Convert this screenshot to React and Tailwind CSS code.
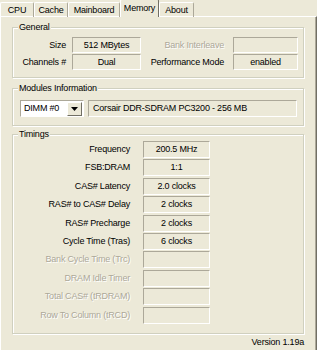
import React from "react";

const sunken =
  "border border-t-[#ACA899] border-l-[#ACA899] border-b-white border-r-white";

function Field({ children, className = "" }) {
  return (
    <div
      className={`h-[16px] ${sunken} flex items-center justify-center text-black leading-none ${className}`}
    >
      {children}
    </div>
  );
}

function Label({ children, disabled, className = "" }) {
  return (
    <div
      className={`text-right leading-none whitespace-nowrap ${
        disabled ? "text-[#ACA899] [text-shadow:1px_1px_0_#ffffff]" : "text-black"
      } ${className}`}
    >
      {children}
    </div>
  );
}

function Group({ title, className = "", children }) {
  return (
    <div
      className={`relative border border-[#D0D0BF] shadow-[inset_1px_1px_0_#ffffff,1px_1px_0_#ffffff] ${className}`}
    >
      <div className="absolute -top-[5px] left-[5px] px-[1px] bg-[#ECE9D8] leading-none text-black">
        {title}
      </div>
      {children}
    </div>
  );
}

const tabs = [
  { name: "CPU", w: "w-[34px]" },
  { name: "Cache", w: "w-[34px]" },
  { name: "Mainboard", w: "w-[52px]" },
  { name: "Memory", w: "w-[39px]", active: true },
  { name: "About", w: "w-[35px]" },
];

const timings = [
  ["Frequency", "200.5 MHz"],
  ["FSB:DRAM", "1:1"],
  ["CAS# Latency", "2.0 clocks"],
  ["RAS# to CAS# Delay", "2 clocks"],
  ["RAS# Precharge", "2 clocks"],
  ["Cycle Time (Tras)", "6 clocks"],
  ["Bank Cycle Time (Trc)", "", true],
  ["DRAM Idle Timer", "", true],
  ["Total CAS# (tRDRAM)", "", true],
  ["Row To Column (tRCD)", "", true],
];

export default function App() {
  return (
    <div className="w-[317px] h-[350px] overflow-hidden bg-[#ECE9D8] font-['Liberation_Sans',Arial,sans-serif] text-[9px] tracking-[-0.2px] flex flex-col">
      {/* Tabs */}
      <div className="h-[17px] flex items-end relative z-10 -mb-[1px]">
        {tabs.map((t) =>
          t.active ? (
            <div
              key={t.name}
              className={`${t.w} h-[18px] bg-[#ECE9D8] border-t border-l border-white border-r border-r-[#716F64] rounded-t-[2px] flex items-center justify-center text-black leading-none`}
            >
              {t.name}
            </div>
          ) : (
            <div
              key={t.name}
              className={`${t.w} h-[15px] border-t border-l border-white border-r border-r-[#ACA899] rounded-t-[2px] flex items-center justify-center text-black leading-none`}
            >
              {t.name}
            </div>
          )
        )}
      </div>

      {/* Panel */}
      <div className="flex-1 border-t border-l border-white border-r border-r-[#716F64] shadow-[inset_-1px_0_0_#ACA899] pl-[11px] pr-[12px] pt-[10px] flex flex-col">
        {/* General */}
        <Group title="General" className="h-[51px] pt-[9px] flex flex-col gap-[1px]">
          <div className="flex items-center">
            <Label className="w-[53px]">Size</Label>
            <Field className="ml-[6px] w-[69px]">512 MBytes</Field>
            <Label disabled className="w-[83px]">Bank Interleave</Label>
            <Field className="ml-[9px] w-[65px]"></Field>
          </div>
          <div className="flex items-center">
            <Label className="w-[53px]">Channels #</Label>
            <Field className="ml-[6px] w-[69px]">Dual</Field>
            <Label className="w-[83px]">Performance Mode</Label>
            <Field className="ml-[9px] w-[65px]">enabled</Field>
          </div>
        </Group>

        {/* Modules */}
        <Group title="Modules Information" className="mt-[10px] h-[38px] pt-[11px] pl-[7px] flex items-start">
          <div className="w-[64px] h-[17px] bg-white border border-t-[#ACA899] border-l-[#ACA899] border-b-white border-r-white flex items-center">
            <span className="pl-[3px] flex-1 text-black leading-none">DIMM #0</span>
            <div className="w-[15px] h-[14px] mr-[1px] bg-[#ECE9D8] border border-t-white border-l-white border-b-[#716F64] border-r-[#716F64] flex items-center justify-center">
              <svg width="7" height="4" viewBox="0 0 7 4">
                <path d="M0 0H7L3.5 4Z" fill="#000" />
              </svg>
            </div>
          </div>
          <div className={`ml-[4px] w-[209px] h-[17px] ${sunken} flex items-center pl-[4px] text-black leading-none`}>
            Corsair DDR-SDRAM PC3200 - 256 MB
          </div>
        </Group>

        {/* Timings */}
        <Group title="Timings" className="mt-[8px] h-[200px] pt-[6px] flex flex-col gap-[1.4px]">
          {timings.map(([l, v, dis]) => (
            <div key={l} className="flex items-center h-[17px]">
              <Label disabled={dis} className="w-[117px]">
                {l}
              </Label>
              <Field className="ml-[13px] w-[67px] h-[17px]">{v}</Field>
            </div>
          ))}
        </Group>

        <div className="mt-[4px] text-right leading-none text-black">Version 1.19a</div>
      </div>
    </div>
  );
}
